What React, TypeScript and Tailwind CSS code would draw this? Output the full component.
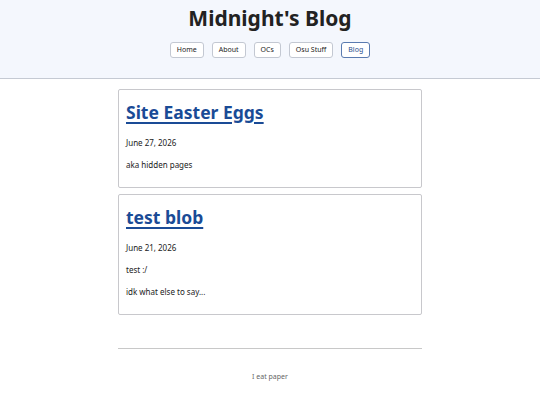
const navItems = ['Home', 'About', 'OCs', 'Osu Stuff', 'Blog'];

const posts = [
  { title: 'Site Easter Eggs', date: 'June 27, 2026', body: ['aka hidden pages'] },
  { title: 'test blob', date: 'June 21, 2026', body: ['test :/', 'idk what else to say...'] },
];

export default function App() {
  return (
    <div className="min-h-screen bg-white text-[#222] font-['Noto_Sans',sans-serif]">
      <header className="h-[79px] bg-[#f4f7fd] border-b border-[#c5cad3] flex flex-col items-center pt-[4px]">
        <h1 className="text-[21px] leading-[28px] font-bold text-[#222]">Midnight's Blog</h1>
        <nav className="mt-[10px] flex gap-[8px]">
          {navItems.map(item => (
            <a
              key={item}
              href="#"
              className={`h-[16px] px-[6px] flex items-center text-[7px] rounded-[3px] border bg-white ${
                item === 'Blog' ? 'border-[#5a7bb0] text-[#2a4f8f]' : 'border-[#c3c8d2] text-[#222]'
              }`}
            >
              {item}
            </a>
          ))}
        </nav>
      </header>

      <main className="w-[304px] mx-auto mt-[10px] flex flex-col gap-[6px]">
        {posts.map(post => (
          <article key={post.title} className="border border-[#c8c8cc] rounded-[2px] px-[7px] pt-[8px] pb-[16px]">
            <h2 className="text-[17.5px] leading-[28px] font-bold">
              <a href="#" className="text-[#1a4b96] underline underline-offset-[3px] decoration-[2px]">
                {post.title}
              </a>
            </h2>
            <p className="mt-[11px] text-[8px] leading-[12px]">{post.date}</p>
            {post.body.map(line => (
              <p key={line} className="mt-[10px] text-[8px] leading-[12px]">{line}</p>
            ))}
          </article>
        ))}
      </main>

      <footer className="w-[304px] mx-auto mt-[33px] border-t border-[#c8c8c8] pt-[23px] text-center">
        <p className="text-[7px] leading-[10px] text-[#666]">I eat paper</p>
      </footer>
    </div>
  );
}
